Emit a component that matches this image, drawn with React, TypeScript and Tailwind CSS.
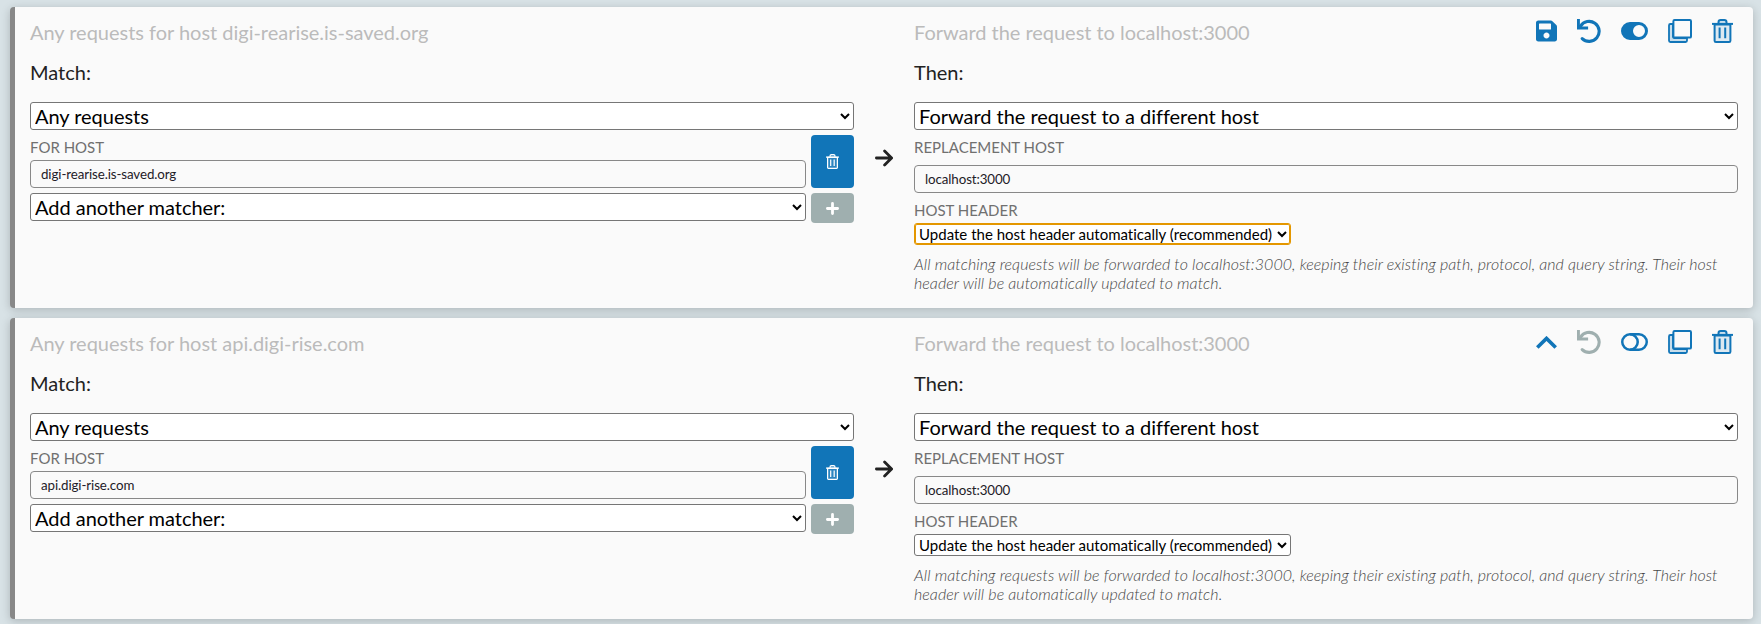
import React from "react";
import { FaSave } from "react-icons/fa";

type Rule = { host: string; changed: boolean };

const rules: Rule[] = [
  { host: "digi-rearise.is-saved.org", changed: true },
  { host: "api.digi-rise.com", changed: false },
];

const selectBase = "block rounded-[3px] border bg-white text-black outline-none";
const bigSelect = `${selectBase} h-7 w-full border-[#767676] pr-px text-[20px] tracking-[-0.03px]`;
const smallSelect = `${selectBase} h-[22px] w-[377px] pb-px text-[15px] tracking-[0.01px]`;

function TrashIcon({ className }: { className: string }) {
  return (
    <svg className={className} viewBox="0 0 21 24" fill="none" stroke="currentColor" strokeWidth="2" strokeLinejoin="round">
      <path d="M2.6 5.5h15.8v16.2a1.3 1.3 0 0 1-1.3 1.3H3.9a1.3 1.3 0 0 1-1.3-1.3z" fill="currentColor" fillOpacity="0.12" strokeWidth="2" />
      <path d="M6.5 4.5V3.2A2.2 2.2 0 0 1 8.7 1h3.6a2.2 2.2 0 0 1 2.2 2.2v1.3" fill="currentColor" fillOpacity="0.2" />
      <path d="M0 4.9h21" />
      <path d="M7.6 8.6v10.6M13.2 8.6v10.6" strokeWidth="2" />
    </svg>
  );
}

function CopyIcon() {
  return (
    <svg className="h-6 w-6" viewBox="0 0 24 24" fill="none" stroke="currentColor" strokeWidth="2" strokeLinejoin="round">
      <path d="M5 5H2.4A1.4 1.4 0 0 0 1 6.4v15.2A1.4 1.4 0 0 0 2.4 23h15.2a1.4 1.4 0 0 0 1.4-1.4V19H6.2A1.2 1.2 0 0 1 5 17.8z" fill="currentColor" fillOpacity="0.22" strokeWidth="1.8" />
      <rect x="5.4" y="1" width="17.6" height="17.6" rx="1.2" />
    </svg>
  );
}

function UndoIcon() {
  return (
    <svg className="h-6 w-6" viewBox="0 0 24 24" fill="none" stroke="currentColor" strokeWidth="3.1">
      <path d="M3.6 7.2A10 10 0 1 1 5.2 19.6" strokeLinecap="round" />
      <path d="M0 0h2.9v6.1l2 1.3h6.2v3H0z" fill="currentColor" stroke="none" />
    </svg>
  );
}

function ToggleIcon({ on }: { on: boolean }) {
  return on ? (
    <svg className="h-[18px] w-[27px]" viewBox="0 0 27 18">
      <path fillRule="evenodd" fill="currentColor" d="M9 0h9a9 9 0 0 1 0 18H9A9 9 0 0 1 9 0zm9 3a6 6 0 1 0 0 12a6 6 0 0 0 0-12z" />
    </svg>
  ) : (
    <svg className="h-[18px] w-[27px]" viewBox="0 0 27 18" fill="none" stroke="currentColor" strokeWidth="2.5">
      <rect x="1.25" y="1.25" width="24.5" height="15.5" rx="7.75" />
      <path d="M9 1.25a7.75 7.75 0 0 1 0 15.5" />
      <path d="M13 2.2a8.5 8.5 0 0 1 0 13.6" strokeWidth="1.4" opacity="0.4" />
    </svg>
  );
}

function ChevronUpIcon() {
  return (
    <svg className="h-[13px] w-[21px]" viewBox="0 0 21 13" fill="none" stroke="currentColor" strokeWidth="3.6">
      <path d="M1.3 11.6l9.2-9.2 9.2 9.2" />
    </svg>
  );
}

function TextInput({ value }: { value: string }) {
  return (
    <input
      className="block h-7 w-full rounded-[4px] border border-[#888888] bg-[#fafafa] px-2.5 pb-px text-[13.33px] tracking-[-0.1px] text-[#1e2028] outline-none"
      defaultValue={value}
    />
  );
}

function Label({ children }: { children: React.ReactNode }) {
  return <div className="text-[15px] leading-[19px] text-[#707070] uppercase">{children}</div>;
}

function RuleCard({ host, changed }: Rule) {
  return (
    <section className="relative flex h-[301px] rounded-[4px] border-l-[5px] border-[#888888] bg-[#fafafa] px-[15px] shadow-[0_2px_10px_0_rgba(0,0,0,0.2)]">
      <div className="w-[824px] pt-[13px]">
        <div className="text-[20px] leading-6 tracking-[-0.02px] text-[#bbbbbb]">Any requests for host {host}</div>
        <div className="mt-4 text-[20px] leading-6 text-[#222222]">Match:</div>
        <div className="mt-[18px]">
          <select className={bigSelect}><option>Any requests</option></select>
        </div>
        <div className="mt-[5px] flex gap-[5px]">
          <div className="w-[776px] pt-[3px]">
            <Label>For host</Label>
            <div className="mt-[3px]"><TextInput value={host} /></div>
          </div>
          <button className="flex h-[53px] w-[43px] items-center justify-center rounded-[4px] bg-[#1175b8] text-white">
            <TrashIcon className="h-[15px] w-[13px]" />
          </button>
        </div>
        <div className="mt-[5px] flex gap-[5px]">
          <div className="w-[776px]">
            <select className={bigSelect}><option>Add another matcher:</option></select>
          </div>
          <button className="flex h-[30px] w-[43px] items-center justify-center rounded-[4px] bg-[#9fafaf] text-white">
            <svg className="h-[13px] w-[13px]" viewBox="0 0 13 13" fill="none" stroke="currentColor" strokeWidth="2.8" strokeLinecap="round">
              <path d="M6.5 1.4v10.2M1.4 6.5h10.2" />
            </svg>
          </button>
        </div>
      </div>

      <div className="flex w-[60px] items-center justify-center pr-px text-[#222222]">
        <svg className="h-[18px] w-[18px]" viewBox="0 0 18 18" fill="none" stroke="currentColor" strokeWidth="2.8" strokeLinecap="round" strokeLinejoin="round">
          <path d="M1.4 9h15M9.6 2l7 7-7 7" />
        </svg>
      </div>

      <div className="w-[824px] pt-[13px]">
        <div className="text-[20px] leading-6 tracking-[-0.03px] text-[#bbbbbb]">Forward the request to localhost:3000</div>
        <div className="mt-4 text-[20px] leading-6 text-[#222222]">Then:</div>
        <div className="mt-[18px]">
          <select className={bigSelect}><option>Forward the request to a different host</option></select>
        </div>
        <div className="mt-2"><Label>Replacement host</Label></div>
        <div className="mt-2"><TextInput value="localhost:3000" /></div>
        <div className="mt-2"><Label>Host header</Label></div>
        <div className="mt-[3px]">
          <select className={changed ? `${smallSelect} border-[#e49700] ring-1 ring-inset ring-[#e49700]` : `${smallSelect} border-[#767676]`}>
            <option>Update the host header automatically (recommended)</option>
          </select>
        </div>
        <p className="mt-[9px] text-[16px] leading-[19px] font-light tracking-[0.065px] text-[#484848] italic">
          All matching requests will be forwarded to localhost:3000, keeping their existing path, protocol, and query string. Their host header will be automatically updated to match.
        </p>
      </div>

      <div className="absolute top-3 right-5 flex h-6 items-center text-[#1175b8]">
        <span className="flex w-[21px] justify-center">{changed ? <FaSave size={24} /> : <ChevronUpIcon />}</span>
        <span className={changed ? "ml-5" : "ml-5 text-[#9fafaf]"}><UndoIcon /></span>
        <span className="ml-5"><ToggleIcon on={changed} /></span>
        <span className="ml-5"><CopyIcon /></span>
        <span className="ml-5"><TrashIcon className="h-6 w-[21px]" /></span>
      </div>
    </section>
  );
}

export default function App() {
  return (
    <main className="flex h-[624px] flex-col gap-[10px] overflow-hidden bg-[#d8e2e6] pt-[7px] pr-2 pl-[10px] font-['Lato',sans-serif]">
      {rules.map((rule) => <RuleCard key={rule.host} {...rule} />)}
    </main>
  );
}
